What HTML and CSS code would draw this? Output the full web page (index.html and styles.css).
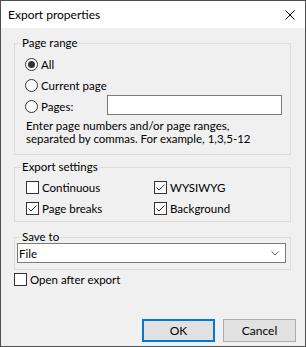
FILE: index.html
```html
<!DOCTYPE html>
<html lang="en">
<head>
    <meta charset="UTF-8">
    <title>Export properties</title>
    <link rel="stylesheet" href="styles.css">
</head>
<body>
    <div class="dialog">
        <div class="titlebar">
            <span class="title">Export properties</span>
            <svg class="close" width="10" height="10" viewBox="0 0 10 10">
                <path d="M0.5 0.5 L9.5 9.5 M9.5 0.5 L0.5 9.5" stroke="#000" stroke-width="1" fill="none"/>
            </svg>
        </div>

        <div class="content">
            <fieldset class="group range">
                <legend>Page range</legend>
                <label class="row"><span class="radio on"></span>All</label>
                <label class="row"><span class="radio"></span>Current page</label>
                <div class="row pages">
                    <label class="row"><span class="radio"></span>Pages:</label>
                    <div class="textbox"></div>
                </div>
                <p class="hint">Enter page numbers and/or page ranges,<br>separated by commas. For example, 1,3,5-12</p>
            </fieldset>

            <fieldset class="group settings">
                <legend>Export settings</legend>
                <div class="checks">
                    <label class="row"><span class="check"></span>Continuous</label>
                    <label class="row"><span class="check on"><svg width="11" height="11" viewBox="0 0 11 11"><path d="M1.5 5.5 L4 8 L9.5 2.5" stroke="#333" stroke-width="1" fill="none"/></svg></span>WYSIWYG</label>
                    <label class="row"><span class="check on"><svg width="11" height="11" viewBox="0 0 11 11"><path d="M1.5 5.5 L4 8 L9.5 2.5" stroke="#333" stroke-width="1" fill="none"/></svg></span>Page breaks</label>
                    <label class="row"><span class="check on"><svg width="11" height="11" viewBox="0 0 11 11"><path d="M1.5 5.5 L4 8 L9.5 2.5" stroke="#333" stroke-width="1" fill="none"/></svg></span>Background</label>
                </div>
            </fieldset>

            <fieldset class="group save">
                <legend>Save to</legend>
                <div class="combo">
                    <span>File</span>
                    <svg width="8" height="5" viewBox="0 0 8 5">
                        <path d="M0.5 0.5 L4 4 L7.5 0.5" stroke="#606060" stroke-width="1" fill="none"/>
                    </svg>
                </div>
            </fieldset>

            <label class="row open-after"><span class="check"></span>Open after export</label>

            <div class="buttons">
                <button class="btn default">OK</button>
                <button class="btn">Cancel</button>
            </div>
        </div>
    </div>
</body>
</html>
```

FILE: styles.css
```css
body {
    margin: 0;
    font-family: Lato, Roboto, sans-serif;
    font-size: 11.5px;
    color: #000;
}
.dialog {
    width: 306px;
    height: 347px;
    box-sizing: border-box;
    border: 1px solid #4f4f4f;
    background-color: #f0f0f0;
    display: flex;
    flex-direction: column;
}
.titlebar {
    height: 27px;
    background-color: #fff;
    display: flex;
    align-items: center;
    justify-content: space-between;
    padding: 0 10px 0 7px;
    flex-shrink: 0;
}
.title {
    font-size: 12px;
    line-height: 16px;
}
.content {
    flex: 1;
    display: flex;
    flex-direction: column;
    padding: 7px 9px 4px 13px;
}
.group {
    margin: 0 5px 0 0;
    border: 1px solid #dcdcdc;
    min-width: 0;
}
.group legend {
    line-height: 16px;
    padding: 0 1px;
}
.row {
    display: flex;
    align-items: center;
    height: 21px;
}
.radio {
    width: 13px;
    height: 13px;
    box-sizing: border-box;
    border: 1px solid #333;
    border-radius: 50%;
    background-color: #fff;
    margin-right: 3px;
    display: flex;
    align-items: center;
    justify-content: center;
}
.radio.on::after {
    content: "";
    width: 7px;
    height: 7px;
    border-radius: 50%;
    background-color: #333;
}
.check {
    width: 13px;
    height: 13px;
    box-sizing: border-box;
    border: 1px solid #333;
    background-color: #fff;
    margin-right: 3px;
    display: flex;
}
.range {
    padding: 3px 8px 9px 10px;
}
.range legend {
    margin-left: -4px;
}
.pages .textbox {
    width: 175px;
    height: 20px;
    box-sizing: border-box;
    border: 1px solid #7a7a7a;
    background-color: #fff;
    margin-left: auto;
    align-self: flex-start;
    margin-top: -1px;
}
.hint {
    margin: 2px 0 0 1px;
    line-height: 13px;
}
.settings {
    margin-top: 4px;
    padding: 2px 0 2px 11px;
}
.settings legend {
    margin-left: -5px;
}
.checks {
    display: grid;
    grid-template-columns: 128px 1fr;
}
.save {
    margin-top: 7px;
    padding: 0 4px 6px 2px;
}
.save legend {
    margin-left: 4px;
}
.combo {
    margin-top: -2px;
    height: 20px;
    box-sizing: border-box;
    border: 1px solid #7a7a7a;
    background-color: #fff;
    display: flex;
    align-items: center;
    justify-content: space-between;
    padding: 0 6px 0 1px;
}
.open-after {
    margin-top: 1px;
    height: 16px;
}
.buttons {
    margin-top: auto;
    display: flex;
    justify-content: flex-end;
    gap: 8px;
}
.btn {
    width: 73px;
    height: 23px;
    box-sizing: border-box;
    font-family: inherit;
    font-size: 12px;
    background-color: #e1e1e1;
    border: 1px solid #adadad;
    padding: 0;
    color: #000;
}
.btn.default {
    border: 2px solid #0078d7;
}
```
